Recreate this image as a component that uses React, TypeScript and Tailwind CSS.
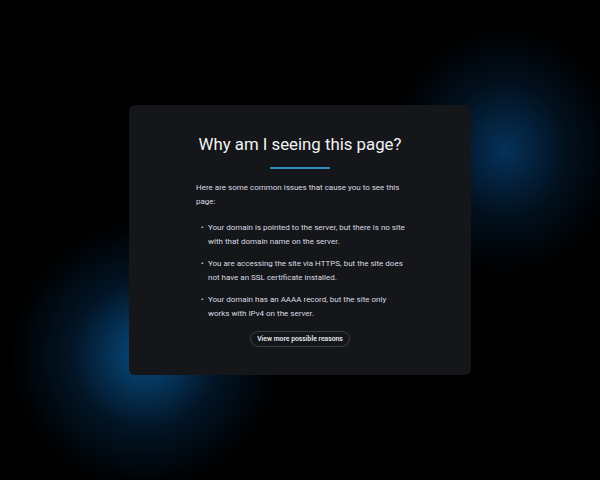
export default function App() {
  const reasons = [
    "Your domain is pointed to the server, but there is no site with that domain name on the server.",
    "You are accessing the site via HTTPS, but the site does not have an SSL certificate installed.",
    "Your domain has an AAAA record, but the site only works with IPv4 on the server.",
  ];

  return (
    <div
      className="w-[600px] h-[480px] flex items-center justify-center bg-black bg-[radial-gradient(ellipse_115px_125px_at_505px_150px,rgba(6,58,105,0.85),rgba(4,38,70,0.4)_55%,transparent_100%),radial-gradient(ellipse_135px_135px_at_145px_355px,rgba(9,90,152,0.85),rgba(5,52,95,0.38)_55%,transparent_100%)]"
      style={{ fontFamily: "Roboto, 'Noto Sans', sans-serif" }}
    >
      <div className="w-[342px] h-[270px] bg-[#14161a] rounded-[6px] flex flex-col items-center pt-[29px]">
        <h1 className="text-[16.8px] leading-[20px] font-normal text-[#f2f3f5]">
          Why am I seeing this page?
        </h1>
        <div className="w-[60px] h-[2px] bg-[#2f8fc6] mt-[13px]" />
        <div className="w-[212px] ml-[4px] mt-[12px] text-[8px] leading-[14px] text-[#d9dbe0]">
          <p>Here are some common issues that cause you to see this page:</p>
          <ul className="mt-[12px] flex flex-col gap-[8px] pl-[5px]">
            {reasons.map((r) => (
              <li key={r} className="flex gap-[4px]">
                <span className="w-[3px] shrink-0">•</span>
                <span>{r}</span>
              </li>
            ))}
          </ul>
        </div>
        <button className="mt-[10px] h-[16px] px-[6px] rounded-full border border-[#3a3d44] text-[6.8px] font-semibold text-[#e4e6ea] leading-none">
          View more possible reasons
        </button>
      </div>
    </div>
  );
}
